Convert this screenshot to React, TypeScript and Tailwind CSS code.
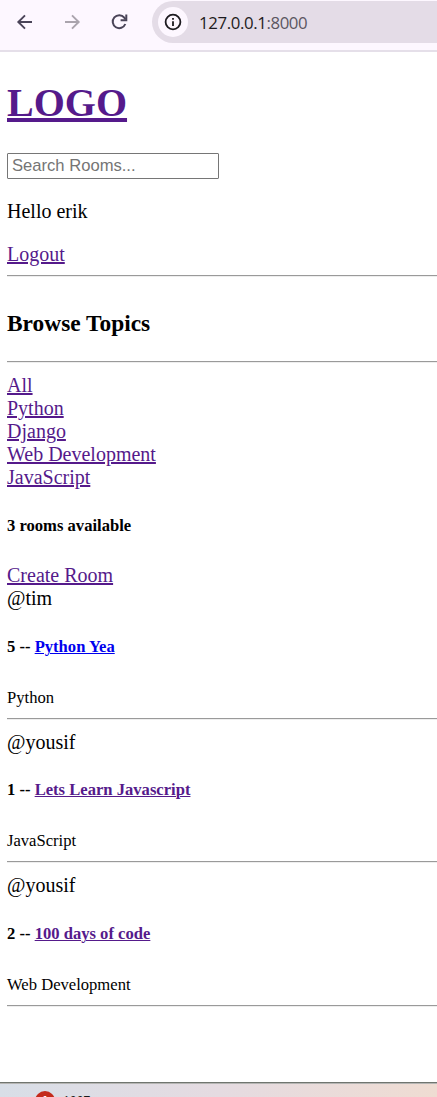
import type { ReactNode } from "react";

const rooms = [
  { host: "@tim", id: 5, name: "Python Yea", topic: "Python", color: "text-[#0000ee]", block: "h-[131px]", gap: "mt-0", title: "mt-[27px]" },
  { host: "@yousif", id: 1, name: "Lets Learn Javascript", topic: "JavaScript", color: "text-[#551a8b]", block: "h-[130px]", gap: "mt-[11px]", title: "mt-[26px]" },
  { host: "@yousif", id: 2, name: "100 days of code", topic: "Web Development", color: "text-[#551a8b]", block: "h-[131px]", gap: "mt-[11px]", title: "mt-[27px]" },
];

const topics = ["All", "Python", "Django", "Web Development", "JavaScript"];

function Rule() {
  return <hr className="h-[2px] w-full border-0 border-t border-[#9a9a9a] bg-[#eeeeee]" />;
}

function Link({ children }: { children: ReactNode }) {
  return (
    <a href="#" className="text-[#551a8b] underline decoration-2 underline-offset-1 [text-decoration-skip-ink:auto]">
      {children}
    </a>
  );
}

function Toolbar() {
  return (
    <header className="flex h-[52px] shrink-0 border-b-2 border-[#e5dfe9] bg-[#fdf7ff]">
      <div className="flex h-[43px] w-[152px] shrink-0 items-center pl-[14px] text-[#4a4458]">
        <svg width="22" height="22" viewBox="0 0 22 22" fill="none" stroke="currentColor" strokeWidth="1.9">
          <path d="M18 11H4.5M11 4.3L4.3 11L11 17.7" />
        </svg>
        <svg className="ml-[25px] text-[#aaa4ad]" width="22" height="22" viewBox="0 0 22 22" fill="none" stroke="currentColor" strokeWidth="1.9">
          <path d="M4 11H17.5M11 4.3L17.7 11L11 17.7" />
        </svg>
        <svg className="ml-[25px]" width="22" height="22" viewBox="0 0 22 22" fill="none" stroke="currentColor" strokeWidth="2">
          <path d="M17.3 13A6.5 6.5 0 1 1 16.3 6.6L17.3 8.2" />
          <path d="M18.3 3.6V9.2H12.6" />
        </svg>
      </div>
      <div className="mt-px flex h-[42px] flex-1 items-center rounded-l-full bg-[#e4dce7] pl-[6px]">
        <div className="flex size-[30px] items-center justify-center rounded-full bg-[#fdf7ff]">
          <svg width="18" height="18" viewBox="0 0 18 18" fill="none" stroke="#1d1b20" strokeWidth="1.8">
            <circle cx="9" cy="9" r="7.4" />
            <path d="M9 8.2V13M9 5V6.8" />
          </svg>
        </div>
        <div className="mt-[2px] ml-[11px] font-['Open_Sans',sans-serif] text-[16.8px] leading-[22px] tracking-[-0.38px] text-[#1d1b20]">
          127.0.0.1<span className="text-[#5b5661]">:8000</span>
        </div>
      </div>
    </header>
  );
}

export default function App() {
  return (
    <div className="flex h-[1097px] w-full flex-col overflow-hidden bg-white font-['Liberation_Serif',serif] text-[20px] leading-[23px] text-black">
      <Toolbar />
      <main className="flex h-[1030px] shrink-0 flex-col pl-[7px]">
        <h1 className="mt-[28px] text-[40px] leading-[46px] font-bold">
          <a href="#" className="text-[#551a8b] underline decoration-4 underline-offset-2">LOGO</a>
        </h1>
        <input
          placeholder="Search Rooms..."
          className="mt-[27px] h-[26px] w-[212px] rounded-[1px] border border-[#767676] px-[4px] font-['Liberation_Sans',sans-serif] text-[16.6px] leading-[20px] placeholder:text-[#757575]"
        />
        <p className="mt-[21px]">Hello erik</p>
        <div className="mt-[20px] h-[32px]"><Link>Logout</Link></div>
        <Rule />
        <h3 className="mt-[33px] h-[51px] text-[23.4px] leading-[27px] font-bold">Browse Topics</h3>
        <Rule />
        <nav className="mt-[11px] flex flex-col">
          {topics.map((t) => (
            <div key={t}><Link>{t}</Link></div>
          ))}
        </nav>
        <h5 className="mt-[27px] text-[16.6px] leading-[19px] font-bold">3 rooms available</h5>
        <div className="mt-[29px]"><Link>Create Room</Link></div>
        {rooms.map((r) => (
          <section key={r.id} className={r.gap}>
            <div className={r.block}>
              <p>{r.host}</p>
              <h5 className={`${r.title} text-[16.6px] leading-[19px] font-bold`}>
                {r.id} -- <a href="#" className={`${r.color} underline decoration-1 underline-offset-1`}>{r.name}</a>
              </h5>
              <p className="mt-[32px] text-[16.6px] leading-[19px]">{r.topic}</p>
            </div>
            <Rule />
          </section>
        ))}
      </main>
      <footer className="flex h-[15px] shrink-0 overflow-hidden border-t border-[#70756f] bg-linear-to-r from-[#d8dee7] via-[#e5dbe1] to-[#efdcd2] pl-[35px] shadow-[inset_0_1px_0_#b5b5b3]">
        <div className="mt-[8px] flex size-[20px] shrink-0 items-center justify-center rounded-full bg-[#c42b1c] font-['Liberation_Sans',sans-serif] text-[12px] leading-[14px] font-bold text-white">1</div>
        <span className="mt-[10px] ml-[8px] font-['Open_Sans',sans-serif] text-[12px] leading-[16px] text-[#1a1a1a]">1997</span>
      </footer>
    </div>
  );
}
